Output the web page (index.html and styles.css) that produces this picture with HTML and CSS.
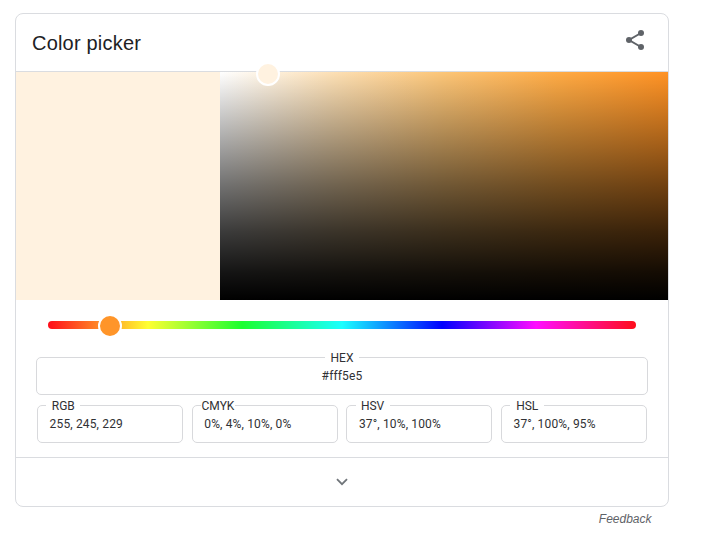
FILE: index.html
```html
<!DOCTYPE html>
<html lang="en">
<head>
<meta charset="utf-8">
<title>Color picker</title>
<link rel="stylesheet" href="styles.css">
</head>
<body>
<main class="widget">
  <section class="card">
    <header class="header">
      <h1 class="title">Color picker</h1>
      <svg class="share" viewBox="0 0 24 24" width="24" height="24" aria-label="Share">
        <path d="M18 5 6 12l12 7" fill="none" stroke="currentColor" stroke-width="2"/>
        <circle cx="18" cy="5" r="3"/><circle cx="6" cy="12" r="3"/><circle cx="18" cy="19" r="3"/>
      </svg>
    </header>
    <div class="preview">
      <div class="swatch"></div>
      <div class="shades"><span class="shade-thumb"></span></div>
    </div>
    <div class="controls">
      <div class="hue"><span class="hue-thumb"></span></div>
      <div class="field field-hex"><span class="label">HEX</span><span class="value">#fff5e5</span></div>
      <div class="fields">
        <div class="field"><span class="label">RGB</span><span class="value">255, 245, 229</span></div>
        <div class="field"><span class="label">CMYK</span><span class="value">0%, 4%, 10%, 0%</span></div>
        <div class="field"><span class="label">HSV</span><span class="value">37°, 10%, 100%</span></div>
        <div class="field"><span class="label">HSL</span><span class="value">37°, 100%, 95%</span></div>
      </div>
    </div>
    <div class="expand">
      <svg viewBox="0 0 12 8" width="12" height="8"><path d="M1 1.2 6 6.2l5-5" fill="none" stroke="currentColor" stroke-width="1.8"/></svg>
    </div>
  </section>
  <a class="feedback">Feedback</a>
</main>
</body>
</html>
```
FILE: styles.css
```css
* { box-sizing: border-box; }
body {
  margin: 0;
  background: #fff;
  color: #303134;
  font-family: Roboto, "Liberation Sans", sans-serif;
}
.widget {
  width: 654px;
  margin: 13px 0 0 15px;
  display: flex;
  flex-direction: column;
}
.card {
  height: 494px;
  border: 1px solid #dadce0;
  border-radius: 8px;
}
.header {
  height: 58px;
  padding: 0 21px 0 16px;
  border-bottom: 1px solid #dadce0;
  display: flex;
  justify-content: space-between;
  align-items: center;
}
.title {
  margin: 1px 0 0;
  font: 400 20px/26px "Liberation Sans", Arial, sans-serif;
  letter-spacing: 0.2px;
  color: #202124;
}
.share {
  width: 24px;
  height: 24px;
  margin-top: -5px;
  color: #5f6368;
  fill: currentColor;
}
.preview { display: flex; height: 228px; }
.swatch { width: 204px; background: #fff2e0; }
.shades {
  position: relative;
  flex: 1;
  background:
    linear-gradient(to top, #000, rgba(0, 0, 0, 0.92) 12%, rgba(0, 0, 0, 0.77) 30%, rgba(0, 0, 0, 0.56) 50%, rgba(0, 0, 0, 0.29) 74%, transparent),
    linear-gradient(to right, #fff, #fde0b5 25%, #fcc577 50%, #ffab45 75%, #ff9224);
}
.shade-thumb, .hue-thumb {
  position: absolute;
  width: 24px;
  height: 24px;
  border: 2px solid #fff;
  border-radius: 50%;
}
.shade-thumb { left: 36px; top: -10px; background: #fff2e0; }
.controls { height: 157px; padding: 21px 20px 0; }
.hue {
  position: relative;
  height: 8px;
  margin: 0 12px 28px;
  border-radius: 4px;
  background: linear-gradient(to right, #ff0d1a 0%, #ffff32 17%, #1aff30 33%, #1affff 50%, #0000ff 67%, #ff0dff 83%, #ff0d1a 100%);
}
.hue-thumb { left: 50px; top: -7px; background: #ff9529; }
.field {
  position: relative;
  width: 146px;
  height: 38px;
  padding: 11px 0 0 11.6px;
  border: 1px solid #d8d9dc;
  border-radius: 5px;
  font-size: 12px;
  line-height: 14px;
  letter-spacing: 0.15px;
}
.field-hex { width: 612px; padding-left: 0; text-align: center; }
.label {
  position: absolute;
  left: 8.3px;
  top: -7px;
  width: 34px;
  display: flex;
  justify-content: center;
  background: #fff;
  letter-spacing: 0;
}
.field-hex .label { left: 288px; }
.fields {
  display: flex;
  justify-content: space-between;
  margin: 10px 1px 0;
}
.expand {
  height: 49px;
  border-top: 1px solid #dadce0;
  display: flex;
  align-items: center;
  justify-content: center;
  color: #70757a;
}
.feedback {
  align-self: flex-end;
  margin: 5px 17.5px 0 0;
  font: italic 12px/14px "Liberation Sans", Arial, sans-serif;
  color: #5f6368;
}
```
